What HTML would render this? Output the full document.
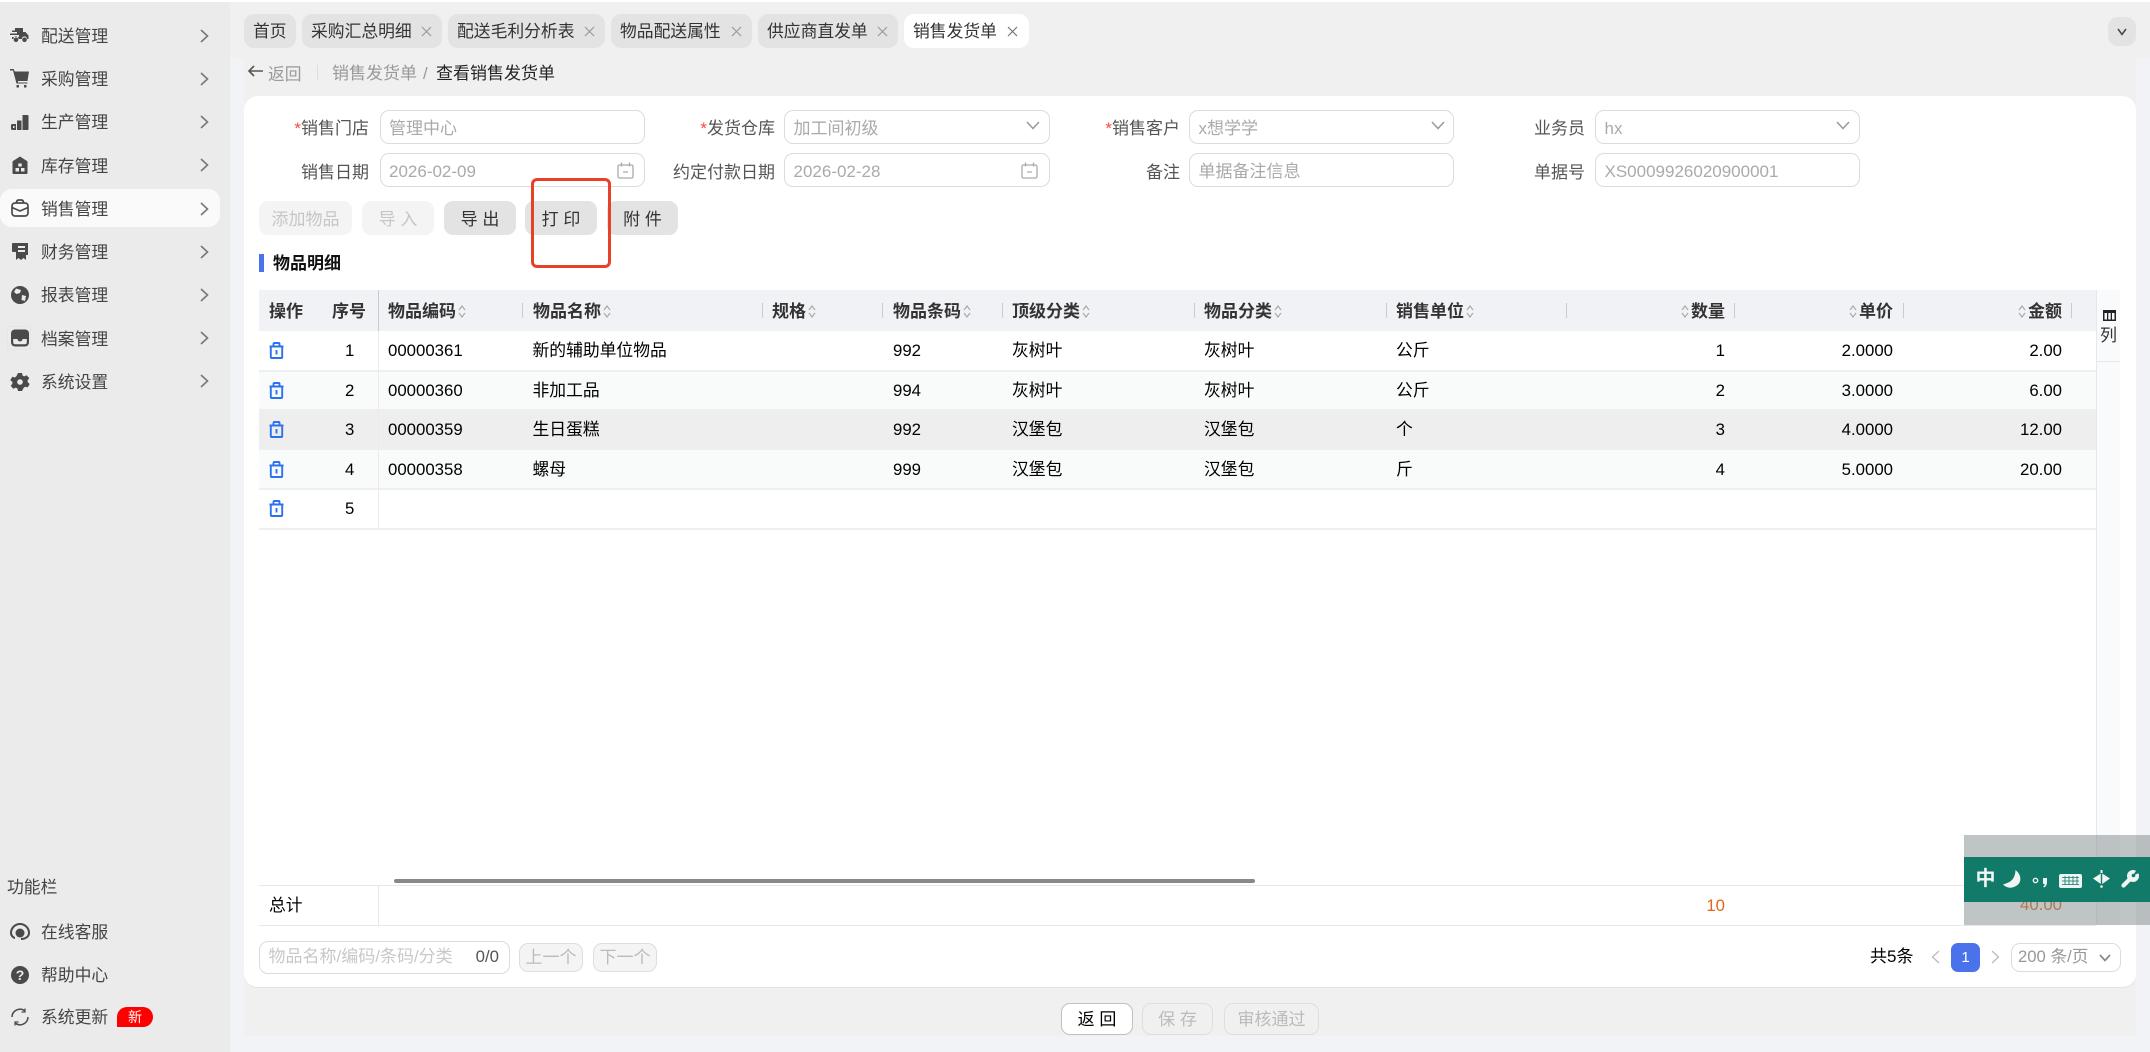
<!DOCTYPE html>
<html lang="zh-CN">
<head>
<meta charset="utf-8">
<title>查看销售发货单</title>
<style>
*{box-sizing:border-box;margin:0;padding:0}
html,body{width:2150px;height:1052px;overflow:hidden;background:#f1f3f6}
body{position:relative;font-family:"Liberation Sans","Noto Sans CJK SC",sans-serif;font-size:16.8px;color:#000}
.a{position:absolute}
.t{position:absolute;white-space:nowrap;line-height:24px;height:24px}
.r{text-align:right}
.side{left:0;top:2px;width:230px;height:1050px;background:#ebebeb}
.nav{color:#444;font-size:16.8px;left:41px}
.ic{position:absolute;left:10px;width:20px;height:20px;fill:#4a4a4a}
.chev{position:absolute;left:200px;width:9px;height:14px;fill:none;stroke:#777;stroke-width:1.6}
.tab{position:absolute;top:14px;height:34px;background:#e3e3e3;border-radius:10px;font-size:16.8px;line-height:35px;color:#333;white-space:nowrap}
.tab span{position:absolute;left:9px}
.tab svg{position:absolute;right:10px;top:12px;width:11px;height:11px;fill:none;stroke:#999;stroke-width:1.2}
.inp{position:absolute;height:34px;border:1.5px solid #dcdcdc;border-radius:9px;background:#fff;color:#aaa;font-size:17px;line-height:35px;padding-left:8.5px;white-space:nowrap}
.lbl{color:#555;text-align:right;font-size:17px}
.req{color:#f44;}
.btn{position:absolute;top:201px;height:34px;background:#e3e3e3;border-radius:9px;font-size:17px;line-height:37px;text-align:center;color:#333;white-space:pre}
.dis{background:#f4f4f4;color:#c6c6c6}
.th{font-weight:bold;color:#333;font-size:17px}
.th svg{width:10px;height:15px;vertical-align:-2px;margin:0 1px;fill:none;stroke:#aaa;stroke-width:1.2}
.div{position:absolute;top:303px;width:1px;height:15px;background:#c9cbd0}
.row{position:absolute;left:259px;width:1837px}
.trash{position:absolute;left:269px;width:15px;height:17px;fill:none;stroke:#2b72ef;stroke-width:1.9}
.sb{position:absolute;top:1003px;height:32px;border-radius:9px;font-size:17px;line-height:32px;text-align:center;white-space:pre}
.pg{position:absolute;top:943px;height:29px;width:64px;border:1.5px solid #dedede;border-radius:9px;background:#f4f4f4;color:#bbb;font-size:17px;line-height:28px;text-align:center}
</style>
</head>
<body>
<div class="a" style="left:0;top:0;width:2150px;height:2px;background:#fff"></div>

<!-- sidebar -->
<div class="a side"></div>
<div class="a" style="left:0;top:189px;width:220px;height:38px;background:#fafafa;border-radius:12px"></div>

<svg class="ic" style="top:25px;left:9px" viewBox="0 0 20 20"><path d="M6 3h8v4h2.500l3 3.500V14h-1.500a2.600 2.600 0 0 0-5.200 0H9.500a2.600 2.600 0 0 0-5.200 0H3v-2h7V10H1V8.500h7V7H3V5.500h3z"/><circle cx="7" cy="14.800" r="2.300"/><circle cx="15.500" cy="14.800" r="2.300"/></svg>
<svg class="ic" style="top:68px" viewBox="0 0 20 20"><path d="M0 1h3.500l1.300 2.500H19l-1.500 9.500H8v1.500h9.500v1H6.500L3 2.500H0z"/><rect x="6.500" y="17" width="2.500" height="2.500"/><rect x="14" y="17" width="2.500" height="2.500"/></svg>
<svg class="ic" style="top:112px" viewBox="0 0 20 20"><path fill-rule="evenodd" d="M12.500 3h5a1 1 0 0 1 1 1v13a1 1 0 0 1-1 1h-5zM7 8.500h4.500V18H7zM2.500 12H6v6H2.500a1.500 1.500 0 0 1-1.500-1.500v-3A1.500 1.500 0 0 1 2.500 12zM3 14v2h1.500v-2z"/></svg>
<svg class="ic" style="top:155px" viewBox="0 0 20 20"><path fill-rule="evenodd" d="M10 1.500l7 4.500a1 1 0 0 1 .5 1V18a1 1 0 0 1-1 1h-13a1 1 0 0 1-1-1V7a1 1 0 0 1 .5-1zM8.300 8.500v3h3.400v-3zM5.500 13v3.500H9V13zm5.500 0v3.500h3.500V13z"/></svg>
<svg class="ic" style="top:198px;fill:none;stroke:#4a4a4a;stroke-width:1.7" viewBox="0 0 20 20"><rect x="2" y="5" width="16" height="13" rx="3"/><path d="M6.500 5V4a2.500 2.500 0 0 1 2.500-2h2a2.500 2.500 0 0 1 2.500 2v1M2 9.500l8 3.500 8-3.500"/></svg>
<svg class="ic" style="top:241px" viewBox="0 0 20 20"><path fill-rule="evenodd" d="M3 2h15v12h-2v5l-2.500-2L11 19l-2.500-2L6 19v-8H3a1 1 0 0 1-1-1V3a1 1 0 0 1 1-1zm5 3v2h7V5zm0 4v2h7V9z"/></svg>
<svg class="ic" style="top:285px" viewBox="0 0 20 20"><circle cx="10" cy="10" r="9"/><path d="M6 3.500l5 1.500-1 3-3.500 1L4 7zM12 10l4 1-1 5-3.500-1z" fill="#ebebeb"/></svg>
<div class="a" style="left:7px;top:326px;width:24px;height:24px;border:1px solid #e6e6e6"></div>
<svg class="ic" style="top:328px" viewBox="0 0 20 20"><rect x="1" y="1.500" width="18" height="17" rx="4"/><path d="M3.200 11h4.300a2.500 2.500 0 0 0 5 0h4.300v3.300a2 2 0 0 1-2 2H5.200a2 2 0 0 1-2-2z" fill="#ebebeb"/></svg>
<svg class="ic" style="top:372px" viewBox="0 0 20 20"><path d="M8 1h4l.6 2.600 1.700.8 2.400-1.200 2.600 3-1.700 2 .1 2 2 1.800-2 3.400-2.600-.7-1.500 1.200L12 19H8l-.6-2.600-1.700-.8-2.400 1.200-2.600-3 1.700-2-.1-2L.3 8.200l2-3.400 2.600.7 1.500-1.200z"/><circle cx="10" cy="10" r="2.800" fill="#ebebeb"/></svg>

<svg class="ic" style="top:922px;fill:none;stroke:#4a4a4a;stroke-width:2" viewBox="0 0 20 20"><path d="M1 11a9 9 0 0 1 18 0M1 11c0 3 3 5 4 5M19 11c0 3-3 6-8 6"/><circle cx="10" cy="11" r="4.500" fill="#4a4a4a" stroke="none"/></svg>
<svg class="ic" style="top:965px" viewBox="0 0 20 20"><circle cx="10" cy="10" r="9"/><text x="10" y="15" text-anchor="middle" font-size="14" font-weight="bold" fill="#ebebeb" font-family="Liberation Sans">?</text></svg>
<svg class="ic" style="top:1007px;fill:none;stroke:#4a4a4a;stroke-width:1.5" viewBox="0 0 20 20"><path d="M2 10a8 8 0 0 1 13-6M18 10a8 8 0 0 1-13 6"/><path d="M15 1.500V5h-3.500M5 18.500V15h3.500" stroke-width="1.2"/></svg>

<div class="t nav" style="top:25px">配送管理</div>
<div class="t nav" style="top:68px">采购管理</div>
<div class="t nav" style="top:111px">生产管理</div>
<div class="t nav" style="top:155px">库存管理</div>
<div class="t nav" style="top:198px">销售管理</div>
<div class="t nav" style="top:241px">财务管理</div>
<div class="t nav" style="top:284px">报表管理</div>
<div class="t nav" style="top:328px">档案管理</div>
<div class="t nav" style="top:371px">系统设置</div>
<svg class="chev" style="top:29px" viewBox="0 0 9 14"><path d="M1 1l6.500 6L1 13"/></svg>
<svg class="chev" style="top:72px" viewBox="0 0 9 14"><path d="M1 1l6.500 6L1 13"/></svg>
<svg class="chev" style="top:115px" viewBox="0 0 9 14"><path d="M1 1l6.500 6L1 13"/></svg>
<svg class="chev" style="top:158px" viewBox="0 0 9 14"><path d="M1 1l6.500 6L1 13"/></svg>
<svg class="chev" style="top:202px" viewBox="0 0 9 14"><path d="M1 1l6.500 6L1 13"/></svg>
<svg class="chev" style="top:245px" viewBox="0 0 9 14"><path d="M1 1l6.500 6L1 13"/></svg>
<svg class="chev" style="top:288px" viewBox="0 0 9 14"><path d="M1 1l6.500 6L1 13"/></svg>
<svg class="chev" style="top:331px" viewBox="0 0 9 14"><path d="M1 1l6.500 6L1 13"/></svg>
<svg class="chev" style="top:374px" viewBox="0 0 9 14"><path d="M1 1l6.500 6L1 13"/></svg>

<div class="t" style="left:7px;top:876px;color:#444;font-size:16.8px">功能栏</div>
<div class="t nav" style="top:921px">在线客服</div>
<div class="t nav" style="top:964px">帮助中心</div>
<div class="t nav" style="top:1006px">系统更新</div>
<div class="a" style="left:117px;top:1007px;width:36px;height:20px;background:#f00;border-radius:10px 10px 10px 0;color:#fff;font-size:14px;line-height:20px;text-align:center">新</div>

<!-- main backgrounds -->
<div class="a" style="left:230px;top:2px;width:1920px;height:56px;background:#f0f0f0"></div>
<div class="a" style="left:244px;top:58px;width:1892px;height:978px;background:#f0f0f0"></div>

<!-- tabs -->
<div class="tab" style="left:244px;width:52px"><span>首页</span></div>
<div class="tab" style="left:302px;width:140px"><span>采购汇总明细</span><svg viewBox="0 0 11 11"><path d="M1 1l9 9M10 1l-9 9"/></svg></div>
<div class="tab" style="left:448px;width:157px"><span>配送毛利分析表</span><svg viewBox="0 0 11 11"><path d="M1 1l9 9M10 1l-9 9"/></svg></div>
<div class="tab" style="left:611px;width:141px"><span>物品配送属性</span><svg viewBox="0 0 11 11"><path d="M1 1l9 9M10 1l-9 9"/></svg></div>
<div class="tab" style="left:758px;width:140px"><span>供应商直发单</span><svg viewBox="0 0 11 11"><path d="M1 1l9 9M10 1l-9 9"/></svg></div>
<div class="tab" style="left:904px;width:125px;background:#fff"><span>销售发货单</span><svg viewBox="0 0 11 11" style="stroke:#777;right:11px"><path d="M1 1l9 9M10 1l-9 9"/></svg></div>
<div class="a" style="left:2108px;top:17px;width:28px;height:29px;background:#e3e3e3;border-radius:10px"></div>
<svg class="a" style="left:2117px;top:28px;width:10px;height:8px;fill:none;stroke:#444;stroke-width:1.5" viewBox="0 0 10 8"><path d="M1 1l4 5.500L9 1"/></svg>

<!-- breadcrumb -->
<svg class="a" style="left:247px;top:64px;width:17px;height:14px;fill:none;stroke:#555;stroke-width:1.6" viewBox="0 0 17 14"><path d="M16 7H2M7 2L2 7l5 5"/></svg>
<div class="t" style="left:268px;top:63px;color:#999;font-size:16.8px">返回</div>
<div class="a" style="left:317px;top:65px;width:1px;height:15px;background:#ddd"></div>
<div class="t" style="left:332px;top:62px;color:#999;font-size:17px">销售发货单</div>
<div class="t" style="left:423px;top:62px;color:#999;font-size:16.8px">/</div>
<div class="t" style="left:436px;top:62px;color:#222;font-size:17px">查看销售发货单</div>

<!-- panel -->
<div class="a" style="left:244px;top:96px;width:1892px;height:892px;background:#fff;border-radius:14px;border-bottom:1px solid #e2e2e2"></div>

<!-- form -->
<div class="t lbl" style="left:280px;width:89px;top:117px"><span class="req">*</span>销售门店</div>
<div class="inp" style="left:379.5px;top:110px;width:265px">管理中心</div>
<div class="t lbl" style="left:685px;width:90px;top:117px"><span class="req">*</span>发货仓库</div>
<div class="inp" style="left:784px;top:110px;width:266px">加工间初级</div>
<div class="t lbl" style="left:1090px;width:90px;top:117px"><span class="req">*</span>销售客户</div>
<div class="inp" style="left:1189px;top:110px;width:265px">x想学学</div>
<div class="t lbl" style="left:1495px;width:90px;top:117px">业务员</div>
<div class="inp" style="left:1595px;top:110px;width:265px">hx</div>
<svg class="a" style="left:1026px;top:121px;width:14px;height:9px;fill:none;stroke:#999;stroke-width:1.5" viewBox="0 0 14 9"><path d="M1 1l6 6.500L13 1"/></svg>
<svg class="a" style="left:1431px;top:121px;width:14px;height:9px;fill:none;stroke:#999;stroke-width:1.5" viewBox="0 0 14 9"><path d="M1 1l6 6.500L13 1"/></svg>
<svg class="a" style="left:1836px;top:121px;width:14px;height:9px;fill:none;stroke:#999;stroke-width:1.5" viewBox="0 0 14 9"><path d="M1 1l6 6.500L13 1"/></svg>

<div class="t lbl" style="left:280px;width:89px;top:160.5px">销售日期</div>
<div class="inp" style="left:379.5px;top:153px;width:265px">2026-02-09</div>
<div class="t lbl" style="left:655px;width:120px;top:160.5px">约定付款日期</div>
<div class="inp" style="left:784px;top:153px;width:266px">2026-02-28</div>
<div class="t lbl" style="left:1090px;width:90px;top:160.5px">备注</div>
<div class="inp" style="left:1189px;top:153px;width:265px">单据备注信息</div>
<div class="t lbl" style="left:1495px;width:90px;top:160.5px">单据号</div>
<div class="inp" style="left:1595px;top:153px;width:265px">XS0009926020900001</div>
<svg class="a" style="left:617px;top:162px;width:17px;height:17px;fill:none;stroke:#aaa;stroke-width:1.3" viewBox="0 0 17 17"><rect x="1" y="3" width="15" height="13" rx="1.500"/><path d="M4.500 0.500v4M12.500 0.500v4M6 10h5"/></svg>
<svg class="a" style="left:1021px;top:162px;width:17px;height:17px;fill:none;stroke:#aaa;stroke-width:1.3" viewBox="0 0 17 17"><rect x="1" y="3" width="15" height="13" rx="1.500"/><path d="M4.500 0.500v4M12.500 0.500v4M6 10h5"/></svg>

<!-- buttons -->
<div class="btn dis" style="left:259px;width:93px">添加物品</div>
<div class="btn dis" style="left:362px;width:72px">导 入</div>
<div class="btn" style="left:444px;width:72px">导 出</div>
<div class="btn" style="left:525px;width:72px">打 印</div>
<div class="btn" style="left:607px;width:71px">附 件</div>
<div class="a" style="left:531px;top:178px;width:80px;height:90px;border:3px solid #e8412a;border-radius:6px"></div>

<!-- section title -->
<div class="a" style="left:259px;top:254px;width:5px;height:18px;background:#4a72ea"></div>
<div class="t" style="left:273px;top:252px;font-weight:bold;font-size:17px;color:#111">物品明细</div>

<!-- table header -->
<div class="a" style="left:259px;top:290px;width:1837px;height:41px;background:#f1f2f5"></div>
<div class="a" style="left:2096px;top:290px;width:24px;height:635px;background:#f9fafc"></div>
<div class="a" style="left:2096px;top:290px;width:1px;height:635px;background:#e8e8e8"></div>
<div class="a" style="left:2096px;top:361px;width:24px;height:1px;background:#e8e8e8"></div>
<svg class="a" style="left:2103px;top:310px;width:13px;height:11px" viewBox="0 0 13 11"><path d="M0 0h13v11H0zM1.500 3v6.500h2.500V3zm3.800 0v6.500h2.400V3zm3.700 0v6.500h2.500V3z" fill="#222" fill-rule="evenodd"/></svg>
<div class="t" style="left:2100px;top:324px;font-size:17px;color:#333">列</div>

<div class="t th" style="left:269px;top:300px">操作</div>
<div class="t th" style="left:332px;top:300px">序号</div>
<div class="a" style="left:378px;top:290px;width:1px;height:41px;background:#c8cacf"></div>

<div class="t th" style="left:388px;top:300px">物品编码<svg viewBox="0 0 10 15"><path d="M2 6l3-4 3 4M2 9l3 4 3-4"/></svg></div>
<div class="div" style="left:522px"></div>
<div class="t th" style="left:533px;top:300px">物品名称<svg viewBox="0 0 10 15"><path d="M2 6l3-4 3 4M2 9l3 4 3-4"/></svg></div>
<div class="div" style="left:762px"></div>
<div class="t th" style="left:772px;top:300px">规格<svg viewBox="0 0 10 15"><path d="M2 6l3-4 3 4M2 9l3 4 3-4"/></svg></div>
<div class="div" style="left:882px"></div>
<div class="t th" style="left:893px;top:300px">物品条码<svg viewBox="0 0 10 15"><path d="M2 6l3-4 3 4M2 9l3 4 3-4"/></svg></div>
<div class="div" style="left:1002px"></div>
<div class="t th" style="left:1012px;top:300px">顶级分类<svg viewBox="0 0 10 15"><path d="M2 6l3-4 3 4M2 9l3 4 3-4"/></svg></div>
<div class="div" style="left:1194px"></div>
<div class="t th" style="left:1204px;top:300px">物品分类<svg viewBox="0 0 10 15"><path d="M2 6l3-4 3 4M2 9l3 4 3-4"/></svg></div>
<div class="div" style="left:1386px"></div>
<div class="t th" style="left:1396px;top:300px">销售单位<svg viewBox="0 0 10 15"><path d="M2 6l3-4 3 4M2 9l3 4 3-4"/></svg></div>
<div class="div" style="left:1566px"></div>
<div class="t th r" style="right:425px;top:300px"><svg viewBox="0 0 10 15"><path d="M2 6l3-4 3 4M2 9l3 4 3-4"/></svg>数量</div>
<div class="div" style="left:1734px"></div>
<div class="t th r" style="right:257px;top:300px"><svg viewBox="0 0 10 15"><path d="M2 6l3-4 3 4M2 9l3 4 3-4"/></svg>单价</div>
<div class="div" style="left:1903px"></div>
<div class="t th r" style="right:88px;top:300px"><svg viewBox="0 0 10 15"><path d="M2 6l3-4 3 4M2 9l3 4 3-4"/></svg>金额</div>
<div class="div" style="left:2071px"></div>

<!-- table rows -->
<div class="row" style="top:371px;height:38px;background:#f9fbfb"></div>
<div class="row" style="top:409px;height:41px;background:#eeeeee"></div>
<div class="row" style="top:450px;height:38px;background:#f9fbfb"></div>
<div class="row" style="top:369.5px;height:2px;background:#eeefef"></div>
<div class="row" style="top:487.5px;height:2px;background:#eeefef"></div>
<div class="row" style="top:527.5px;height:2px;background:#eeefef"></div>
<div class="a" style="left:378px;top:331px;width:1px;height:197px;background:#ebebeb"></div>

<svg class="trash" style="top:341.5px" viewBox="0 0 15 17"><path d="M0.500 4.500h14M4.500 4.500V1.800a.8.8 0 0 1 .8-.8h4.400a.8.8 0 0 1 .8.800V4.500M1.800 4.500V15a1 1 0 0 0 1 1h9.400a1 1 0 0 0 1-1V4.500M7.500 8v4.500"/></svg>
<svg class="trash" style="top:381.5px" viewBox="0 0 15 17"><path d="M0.500 4.500h14M4.500 4.500V1.800a.8.8 0 0 1 .8-.8h4.400a.8.8 0 0 1 .8.800V4.500M1.800 4.500V15a1 1 0 0 0 1 1h9.400a1 1 0 0 0 1-1V4.500M7.500 8v4.500"/></svg>
<svg class="trash" style="top:420.5px" viewBox="0 0 15 17"><path d="M0.500 4.500h14M4.500 4.500V1.800a.8.8 0 0 1 .8-.8h4.400a.8.8 0 0 1 .8.800V4.500M1.800 4.500V15a1 1 0 0 0 1 1h9.400a1 1 0 0 0 1-1V4.500M7.500 8v4.500"/></svg>
<svg class="trash" style="top:460.5px" viewBox="0 0 15 17"><path d="M0.500 4.500h14M4.500 4.500V1.800a.8.8 0 0 1 .8-.8h4.400a.8.8 0 0 1 .8.800V4.500M1.800 4.500V15a1 1 0 0 0 1 1h9.400a1 1 0 0 0 1-1V4.500M7.500 8v4.500"/></svg>
<svg class="trash" style="top:499.5px" viewBox="0 0 15 17"><path d="M0.500 4.500h14M4.500 4.500V1.800a.8.8 0 0 1 .8-.8h4.400a.8.8 0 0 1 .8.800V4.500M1.800 4.500V15a1 1 0 0 0 1 1h9.400a1 1 0 0 0 1-1V4.500M7.500 8v4.500"/></svg>

<div class="t" style="left:345px;top:339px">1</div>
<div class="t" style="left:388px;top:339px">00000361</div>
<div class="t" style="left:532.5px;top:339px">新的辅助单位物品</div>
<div class="t" style="left:893px;top:339px">992</div>
<div class="t" style="left:1012px;top:339px">灰树叶</div>
<div class="t" style="left:1204px;top:339px">灰树叶</div>
<div class="t" style="left:1396px;top:339px">公斤</div>
<div class="t r" style="right:425px;top:339px">1</div>
<div class="t r" style="right:257px;top:339px">2.0000</div>
<div class="t r" style="right:88px;top:339px">2.00</div>

<div class="t" style="left:345px;top:378.5px">2</div>
<div class="t" style="left:388px;top:378.5px">00000360</div>
<div class="t" style="left:532.5px;top:378.5px">非加工品</div>
<div class="t" style="left:893px;top:378.5px">994</div>
<div class="t" style="left:1012px;top:378.5px">灰树叶</div>
<div class="t" style="left:1204px;top:378.5px">灰树叶</div>
<div class="t" style="left:1396px;top:378.5px">公斤</div>
<div class="t r" style="right:425px;top:378.5px">2</div>
<div class="t r" style="right:257px;top:378.5px">3.0000</div>
<div class="t r" style="right:88px;top:378.5px">6.00</div>

<div class="t" style="left:345px;top:418px">3</div>
<div class="t" style="left:388px;top:418px">00000359</div>
<div class="t" style="left:532.5px;top:418px">生日蛋糕</div>
<div class="t" style="left:893px;top:418px">992</div>
<div class="t" style="left:1012px;top:418px">汉堡包</div>
<div class="t" style="left:1204px;top:418px">汉堡包</div>
<div class="t" style="left:1396px;top:418px">个</div>
<div class="t r" style="right:425px;top:418px">3</div>
<div class="t r" style="right:257px;top:418px">4.0000</div>
<div class="t r" style="right:88px;top:418px">12.00</div>

<div class="t" style="left:345px;top:457.5px">4</div>
<div class="t" style="left:388px;top:457.5px">00000358</div>
<div class="t" style="left:532.5px;top:457.5px">螺母</div>
<div class="t" style="left:893px;top:457.5px">999</div>
<div class="t" style="left:1012px;top:457.5px">汉堡包</div>
<div class="t" style="left:1204px;top:457.5px">汉堡包</div>
<div class="t" style="left:1396px;top:457.5px">斤</div>
<div class="t r" style="right:425px;top:457.5px">4</div>
<div class="t r" style="right:257px;top:457.5px">5.0000</div>
<div class="t r" style="right:88px;top:457.5px">20.00</div>

<div class="t" style="left:345px;top:496.5px">5</div>

<!-- scrollbar + totals -->
<div class="a" style="left:394px;top:879px;width:861px;height:4px;background:#888;border-radius:2px"></div>
<div class="a" style="left:259px;top:885px;width:1837px;height:1px;background:#e8e8e8"></div>
<div class="a" style="left:378px;top:885px;width:1px;height:40px;background:#e8e8e8"></div>
<div class="a" style="left:259px;top:925px;width:1837px;height:1px;background:#e8e8e8"></div>
<div class="t" style="left:269px;top:894px">总计</div>
<div class="t r" style="right:425px;top:894px;color:#e0661a">10</div>
<div class="t r" style="right:88px;top:893px;color:#e0661a">40.00</div>

<!-- bottom controls -->
<div class="inp" style="left:259px;top:941px;width:251px;height:33px;line-height:30px;color:#c8c8c8;font-size:17px">物品名称/编码/条码/分类</div>
<div class="t r" style="right:1651px;top:945px;color:#555">0/0</div>
<div class="pg" style="left:519px">上一个</div>
<div class="pg" style="left:593px">下一个</div>

<div class="t" style="left:1870px;top:945px;font-size:17px">共5条</div>
<svg class="a" style="left:1931px;top:950px;width:9px;height:14px;fill:none;stroke:#bbb;stroke-width:1.3" viewBox="0 0 9 14"><path d="M8 1L1.500 7 8 13"/></svg>
<div class="a" style="left:1951px;top:943px;width:29px;height:29px;background:#4a72ea;border-radius:7px;color:#fff;text-align:center;line-height:29px;font-size:15px">1</div>
<svg class="a" style="left:1991px;top:950px;width:9px;height:14px;fill:none;stroke:#bbb;stroke-width:1.3" viewBox="0 0 9 14"><path d="M1 1l6.500 6L1 13"/></svg>
<div class="inp" style="left:2011px;top:943px;width:110px;height:29px;line-height:26px;color:#999;font-size:16.7px;padding-left:6px">200 条/页</div>
<svg class="a" style="left:2099px;top:954px;width:12px;height:8px;fill:none;stroke:#888;stroke-width:1.7" viewBox="0 0 12 8"><path d="M1 1l5 5.500L11 1"/></svg>

<!-- bottom buttons -->
<div class="sb" style="left:1061px;width:72px;background:#fff;border:1.5px solid #c0c0c0;color:#000">返 回</div>
<div class="sb" style="left:1142px;width:71px;background:#f0f0f0;border:1.5px solid #dedede;color:#bbb">保 存</div>
<div class="sb" style="left:1224px;width:95px;background:#f0f0f0;border:1.5px solid #dedede;color:#bbb">审核通过</div>

<!-- IME overlay -->
<div class="a" style="left:1964px;top:835px;width:186px;height:90px;background:rgba(128,138,138,.5)"></div>
<div class="a" style="left:1964px;top:857px;width:186px;height:45px;background:#117a69"></div>
<div class="t" style="left:1975.5px;top:867px;color:#f2f7f6;font-weight:bold;font-size:20px">中</div>
<svg class="a" style="left:2003px;top:870px;width:18px;height:18px" viewBox="0 0 18 18"><path d="M12.500 0C19 5 19.500 14 11 17 7 18.500 3 17.500 0 14.500 4 13 12 12 12.500 0z" fill="#eef5f3"/></svg>
<svg class="a" style="left:2032px;top:876px;width:18px;height:12px" viewBox="0 0 18 12"><circle cx="3.500" cy="4.500" r="2.200" fill="none" stroke="#eef5f3" stroke-width="1.400"/><path d="M11 2h4v4c0 2.500-1 4.500-3 5.500l-.8-1c1-.7 1.500-1.500 1.500-2.500H11z" fill="#eef5f3"/></svg>
<svg class="a" style="left:2059px;top:874px;width:23px;height:14px" viewBox="0 0 23 14"><rect width="23" height="14" rx="2" fill="#eef5f3"/><path d="M3 3.500h17M3 7h17M3 10.500h17M6 2v9M10 2v9M14 2v9M18 2v9" stroke="#117a69" stroke-width=".8"/></svg>
<svg class="a" style="left:2093px;top:870px;width:17px;height:18px" viewBox="0 0 17 18"><path d="M7.800 3.500V14L0 8.500zM9.200 3.500V14L17 8.500z" fill="#eef5f3"/><rect x="7.500" y="0" width="2" height="3" fill="#eef5f3"/><circle cx="8.500" cy="16.500" r="1.300" fill="#eef5f3"/></svg>
<svg class="a" style="left:2121px;top:870px;width:18px;height:18px" viewBox="0 0 18 18"><circle cx="12" cy="6" r="6" fill="#eef5f3"/><path d="M12 5.500L15.500 0l2.500 3z" fill="#117a69"/><circle cx="12.500" cy="5.500" r="1.800" fill="#117a69"/><path d="M2.500 15.500l6.500-6.500" stroke="#eef5f3" stroke-width="4.200" stroke-linecap="round"/></svg>
</body>
</html>
